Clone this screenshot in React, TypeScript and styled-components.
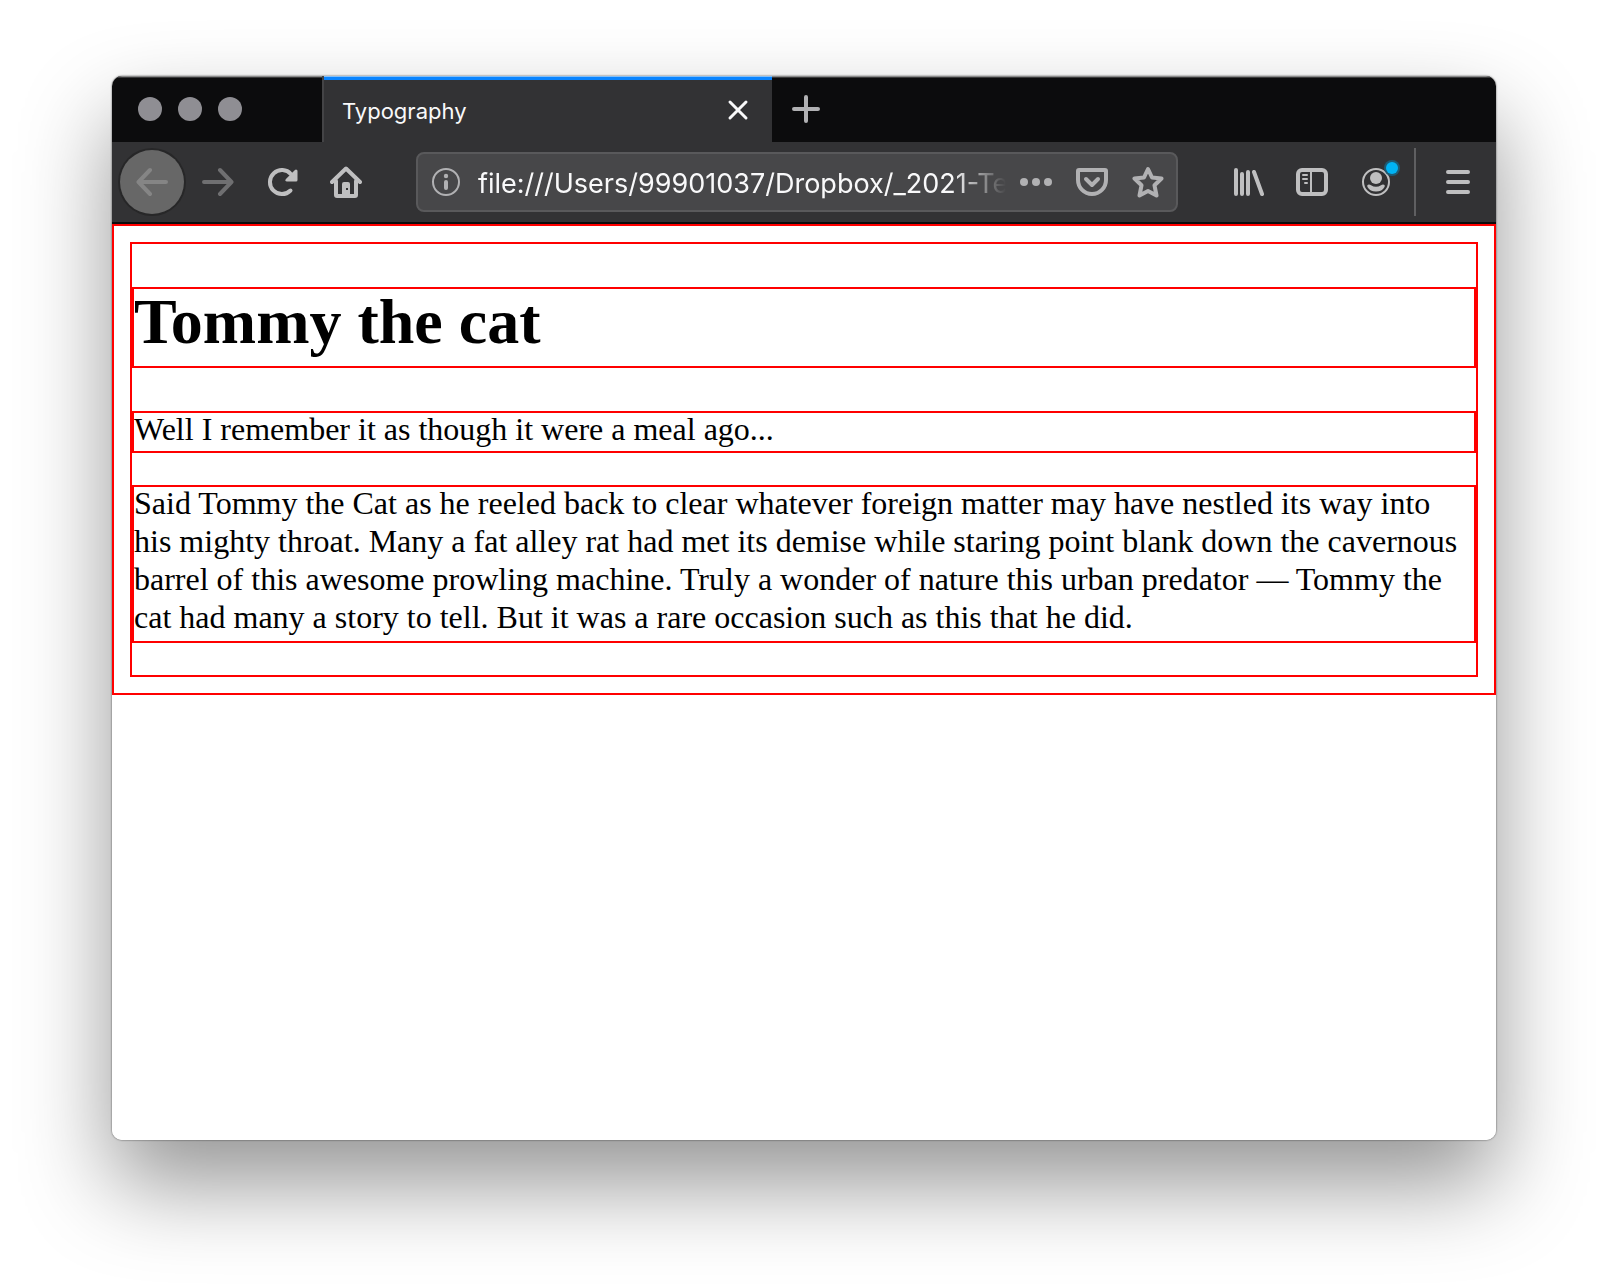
import React from 'react';
import styled, { createGlobalStyle, css } from 'styled-components';

const uiFont = 'Inter, Roboto, "Liberation Sans", sans-serif';
const pageFont = '"Liberation Serif", "Times New Roman", serif';

const GlobalStyle = createGlobalStyle`
  *, *::before, *::after { box-sizing: border-box; }
  body { margin: 0; background: #fff; }
`;

const Desktop = styled.div`
  min-height: 100vh;
  display: flex;
  padding: 76px 112px 148px;
  overflow: hidden;
`;

const BrowserWindow = styled.div`
  flex: 1;
  min-width: 0;
  display: flex;
  flex-direction: column;
  border-radius: 10px;
  overflow: hidden;
  background: #fff;
  box-shadow: 0 0 2px rgba(0, 0, 0, 0.7), 0 44px 90px rgba(0, 0, 0, 0.42);
`;

const TitleBar = styled.header`
  display: flex;
  height: 66px;
  background: #0c0c0d;
  box-shadow: inset 0 1px 0 #8a8a8a, inset 0 2px 0 #3a3a3b;
`;

const TrafficLights = styled.div`
  width: 210px;
  display: flex;
  align-items: center;
  gap: 16px;
  padding-left: 26px;
`;

const Light = styled.button`
  width: 24px;
  height: 24px;
  padding: 0;
  border: 0;
  border-radius: 50%;
  background: #8f8e93;
`;

const Tab = styled.div`
  width: 450px;
  display: flex;
  align-items: center;
  justify-content: space-between;
  padding: 2px 16px 0 18px;
  border-left: 2px solid #444446;
  background: #323234;
  box-shadow: inset 0 1px 0 #86bff5, inset 0 4px 0 #0a84ff;
`;

const TabTitle = styled.span`
  font: 400 22px/30px ${uiFont};
  padding-top: 2px;
  color: #f9f9fa;
`;

const iconReset = css`
  display: flex;
  flex: none;
  align-items: center;
  justify-content: center;
  padding: 0;
  border: 0;
  background: transparent;
`;

const TabButton = styled.button<{ $color: string }>`
  ${iconReset}
  width: 36px;
  height: 64px;
  color: ${(p) => p.$color};
`;

const NewTabButton = styled(TabButton)`
  width: 68px;
  height: 66px;
`;

const ToolBar = styled.nav`
  display: flex;
  align-items: center;
  height: 82px;
  padding: 0 6px 0 8px;
  border-bottom: 2px solid #0c0c0d;
  background: #323234;
`;

const ToolGroup = styled.div`
  display: flex;
  align-items: center;
`;

const ToolButton = styled.button<{ $color?: string }>`
  ${iconReset}
  position: relative;
  width: 64px;
  height: 64px;
  color: ${(p) => p.$color ?? '#bfbfc0'};
`;

const BackButton = styled(ToolButton)`
  margin-right: 2px;
  border-radius: 50%;
  background: #676767;
  box-shadow: 0 0 0 2px #272728;
`;

const NoticeDot = styled.span`
  position: absolute;
  top: 12px;
  right: 10px;
  width: 12px;
  height: 12px;
  border-radius: 50%;
  background: #00b3f4;
  box-shadow: 0 0 0 2px #1d5a73;
`;

const Divider = styled.div`
  width: 2px;
  height: 68px;
  margin: 0 10px 0 6px;
  background: #5f5f61;
`;

const AddressBar = styled.div`
  flex: 1;
  min-width: 0;
  display: flex;
  align-items: center;
  height: 60px;
  margin: 0 38px;
  border: 2px solid #59595b;
  border-radius: 8px;
  background: #474749;
`;

const AddressButton = styled.button`
  ${iconReset}
  width: 56px;
  height: 56px;
  color: #b1b1b3;
`;

const AddressInput = styled.input`
  flex: 1;
  min-width: 0;
  height: 56px;
  padding: 2px 0 0 4px;
  margin-right: 2px;
  border: 0;
  outline: 0;
  background: transparent;
  color: #f9f9fa;
  font: 400 27px/40px ${uiFont};
  mask-image: linear-gradient(to left, transparent, #000 54px);
`;

const outline = css`
  border: 2px solid #f00;
`;

const Viewport = styled.main`
  flex: 1;
  background: #fff;
  color: #000;
  font: 32px/38px ${pageFont};
`;

const RootBox = styled.div`
  ${outline}
  padding: 16px;
`;

const BodyBox = styled.div`
  ${outline}
`;

const Heading = styled.h1`
  ${outline}
  margin: 43px 0;
  padding-bottom: 12px;
  font-size: 64px;
  line-height: 65px;
`;

const Paragraph = styled.p`
  ${outline}
  margin: 32px 0;

  &:last-child {
    padding-bottom: 2px;
  }
`;

const Copy = styled.span`
  display: block;
  margin-top: -3px;
  padding-bottom: 3px;
`;

function Icon({ children, size = 32 }: { children: React.ReactNode; size?: number }) {
  return (
    <svg
      width={size}
      height={size}
      viewBox={`0 0 ${size} ${size}`}
      fill="none"
      stroke="currentColor"
      strokeWidth={4}
      strokeLinecap="round"
      strokeLinejoin="round"
      aria-hidden="true"
    >
      {children}
    </svg>
  );
}

export default function App() {
  return (
    <>
      <GlobalStyle />
      <Desktop>
        <BrowserWindow>
          <TitleBar>
            <TrafficLights>
              <Light aria-label="Close window" />
              <Light aria-label="Minimize window" />
              <Light aria-label="Zoom window" />
            </TrafficLights>
            <Tab>
              <TabTitle>Typography</TabTitle>
              <TabButton $color="#f9f9fa" aria-label="Close tab">
                <Icon>
                  <path d="M8 8l16 16M24 8L8 24" strokeWidth={3} />
                </Icon>
              </TabButton>
            </Tab>
            <NewTabButton $color="#b1b1b3" aria-label="New tab">
              <Icon>
                <path d="M16 4v24M4 16h24" />
              </Icon>
            </NewTabButton>
          </TitleBar>

          <ToolBar>
            <ToolGroup>
              <BackButton $color="#858585" aria-label="Back">
                <Icon>
                  <path d="M30 16H3M14 4L2.5 16 14 28" />
                </Icon>
              </BackButton>
              <ToolButton $color="#6f6f71" aria-label="Forward">
                <Icon>
                  <path d="M2 16h27M18 4l11.5 12L18 28" />
                </Icon>
              </ToolButton>
              <ToolButton aria-label="Reload">
                <Icon>
                  <path d="M24.5 24.5A12 12 0 1 1 25 8.2" />
                  <path d="M31 5v10h-12z" fill="currentColor" stroke="none" />
                  <path d="M30 5v9h-9z" fill="currentColor" strokeWidth={3} />
                </Icon>
              </ToolButton>
              <ToolButton aria-label="Home">
                <Icon>
                  <path d="M2 16L16 2.500 30 16" />
                  <path d="M6 15v14a1 1 0 0 0 1 1h18a1 1 0 0 0 1-1V15" />
                  <path
                    d="M12 30V18a2 2 0 0 1 2-2h4a2 2 0 0 1 2 2v12zM16 22v2h2v-2z"
                    fill="currentColor"
                    fillRule="evenodd"
                    stroke="none"
                  />
                </Icon>
              </ToolButton>
            </ToolGroup>

            <AddressBar>
              <AddressButton aria-label="Site information">
                <Icon>
                  <circle cx="16" cy="16" r="13" strokeWidth={2} />
                  <circle cx="16" cy="10" r="2.200" fill="currentColor" stroke="none" />
                  <path d="M16 16v6" />
                </Icon>
              </AddressButton>
              <AddressInput
                aria-label="Address"
                type="text"
                defaultValue="file:///Users/99901037/Dropbox/_2021-Te"
              />
              <AddressButton aria-label="Page actions">
                <Icon>
                  <g fill="currentColor" stroke="none">
                    <circle cx="4" cy="16" r="4" />
                    <circle cx="16" cy="16" r="4" />
                    <circle cx="28" cy="16" r="4" />
                  </g>
                </Icon>
              </AddressButton>
              <AddressButton aria-label="Save to Pocket">
                <Icon>
                  <path d="M3 4h26a1 1 0 0 1 1 1v9a14 14 0 0 1-28 0V5a1 1 0 0 1 1-1z" />
                  <path d="M10 13l6 6 6-6" />
                </Icon>
              </AddressButton>
              <AddressButton aria-label="Bookmark this page">
                <Icon>
                  <path
                    d="M16 3l4 8.500 9.500 1-7 6.800 2 10.200L16 25l-8.500 4.500 2-10.200-7-6.800 9.500-1z"
                    strokeWidth={4}
                  />
                </Icon>
              </AddressButton>
            </AddressBar>

            <ToolGroup>
              <ToolButton aria-label="Library">
                <Icon>
                  <path d="M4 4v24M10 8v20M16 6v22M22 6l8 22" />
                </Icon>
              </ToolButton>
              <ToolButton aria-label="Sidebars">
                <Icon>
                  <rect x="2" y="6" width="28" height="24" rx="4" transform="translate(0 -2)" />
                  <path d="M15 4v24M7 9h4M7 13h4M9 17h2" strokeWidth={2} />
                </Icon>
              </ToolButton>
              <ToolButton aria-label="Account">
                <Icon>
                  <circle cx="16" cy="16" r="13" strokeWidth={2} />
                  <circle cx="16" cy="12" r="6" fill="currentColor" stroke="none" />
                  <path
                    d="M9 18.500q1 0 2 .7 5 3 10 0 1-.7 2-.7 2.500.3 1.500 2.500Q22 25.500 16 25.500T7.500 21Q6.500 18.800 9 18.500z"
                    fill="currentColor"
                    stroke="none"
                  />
                </Icon>
                <NoticeDot />
              </ToolButton>
            </ToolGroup>
            <Divider />
            <ToolButton aria-label="Open menu">
              <Icon>
                <path d="M6 6h20M6 16h20M6 26h20" />
              </Icon>
            </ToolButton>
          </ToolBar>

          <Viewport>
            <RootBox>
              <BodyBox>
                <Heading>Tommy the cat</Heading>
                <Paragraph>
                  <Copy>Well I remember it as though it were a meal ago...</Copy>
                </Paragraph>
                <Paragraph>
                  <Copy>
                    Said Tommy the Cat as he reeled back to clear whatever foreign matter may have
                    nestled its way into his mighty throat. Many a fat alley rat had met its demise
                    while staring point blank down the cavernous barrel of this awesome prowling
                    machine. Truly a wonder of nature this urban predator — Tommy the cat had many a
                    story to tell. But it was a rare occasion such as this that he did.
                  </Copy>
                </Paragraph>
              </BodyBox>
            </RootBox>
          </Viewport>
        </BrowserWindow>
      </Desktop>
    </>
  );
}
